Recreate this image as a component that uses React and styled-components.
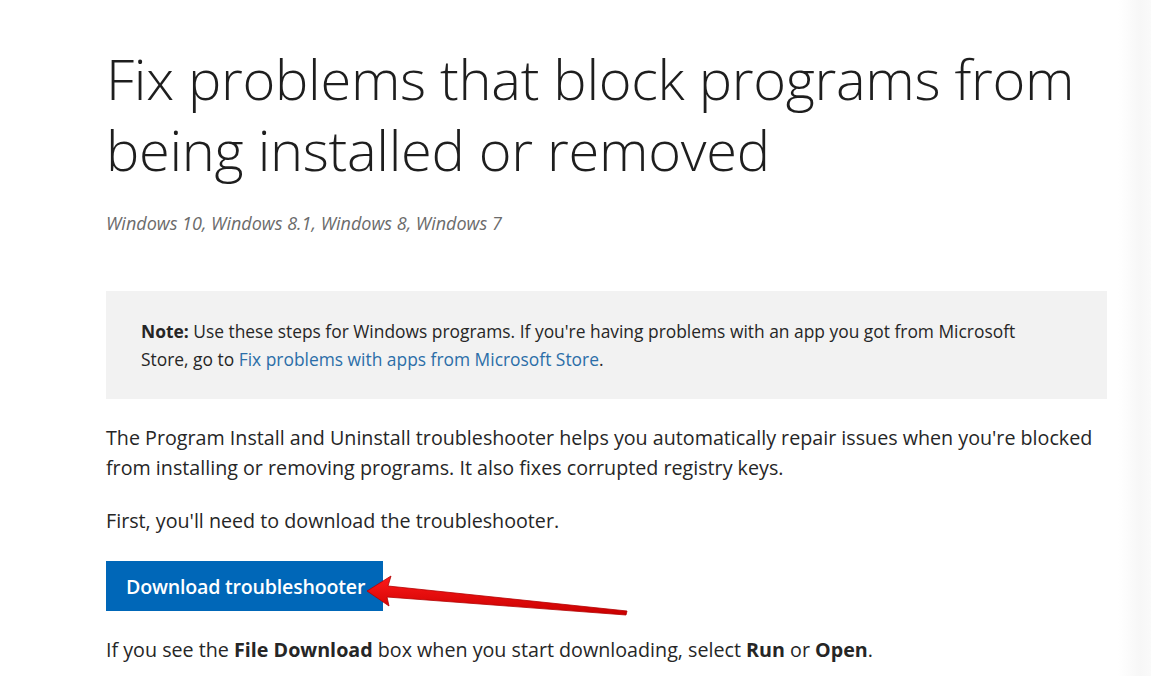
import React from 'react';
import styled, { createGlobalStyle } from 'styled-components';

const GlobalStyle = createGlobalStyle`
  body {
    margin: 0;
    background: #ffffff;
    font-family: "Open Sans", "Noto Sans", Arial, sans-serif;
    color: #262626;
  }
`;

const Page = styled.div`
  position: relative;
  width: 1151px;
  height: 676px;
  overflow: hidden;
  background: linear-gradient(to right, #ffffff 0, #ffffff 1118px, #f7f7f7 1140px, #fafafa 1151px);
`;

const Content = styled.main`
  width: 1001px;
  padding: 43px 0 0 106px;
`;

const Title = styled.h1`
  margin: 0;
  white-space: nowrap;
  font-family: "Open Sans", "Noto Sans", sans-serif;
  font-weight: 300;
  font-size: 56px;
  line-height: 71px;
  color: #1e1e1e;
  letter-spacing: -0.3px;
`;

const Applies = styled.p`
  margin: 26px 0 0;
  font-style: italic;
  font-size: 18px;
  line-height: 24px;
  color: #6b6b6b;
`;

const Note = styled.div`
  margin-top: 56px;
  background: #f2f2f2;
  padding: 26px 35px 26px 35px;
  font-size: 17.4px;
  line-height: 28px;
  color: #262626;
  white-space: nowrap;
`;

const Link = styled.a`
  color: #2b6ea8;
  text-decoration: none;
`;

const Para = styled.p`
  margin: ${(p) => p.$top || 0}px 0 0;
  font-size: 19.7px;
  line-height: 30px;
  color: #262626;
  white-space: nowrap;
`;

const ButtonRow = styled.div`
  position: relative;
  margin-top: 25px;
  height: 50px;
`;

const Button = styled.button`
  display: inline-flex;
  align-items: center;
  height: 50px;
  padding: 0 18px 0 20px;
  border: none;
  background: #0067b8;
  color: #ffffff;
  font-family: "Open Sans", "Noto Sans", sans-serif;
  font-weight: 600;
  font-size: 19.6px;
  letter-spacing: -0.2px;
  cursor: pointer;
`;

const Arrow = styled.svg`
  position: absolute;
  left: 0;
  top: 0;
  overflow: visible;
  pointer-events: none;
`;

export default function App() {
  return (
    <Page>
      <GlobalStyle />
      <Content>
        <Title>
          Fix problems that block programs from
          <br />
          being installed or removed
        </Title>
        <Applies>Windows 10, Windows 8.1, Windows 8, Windows 7</Applies>
        <Note>
          <strong>Note:</strong> Use these steps for Windows programs. If you're having problems with an app you got from Microsoft
          <br />
          Store, go to <Link href="#">Fix problems with apps from Microsoft Store</Link>.
        </Note>
        <Para $top={24}>
          The Program Install and Uninstall troubleshooter helps you automatically repair issues when you're blocked
          <br />
          from installing or removing programs. It also fixes corrupted registry keys.
        </Para>
        <Para $top={23}>First, you'll need to download the troubleshooter.</Para>
        <ButtonRow>
          <Button>Download troubleshooter</Button>
          <Arrow width="540" height="60" viewBox="0 0 540 60">
            <defs>
              <linearGradient id="shaft" x1="0" y1="0" x2="0" y2="1">
                <stop offset="0" stopColor="#ff1a1a" />
                <stop offset="1" stopColor="#c80000" />
              </linearGradient>
            </defs>
            <polygon
              points="261,30 285,15 282,25 521,50 520,54 281,36 283,45"
              fill="url(#shaft)"
              stroke="#b30000"
              strokeWidth="0.8"
              strokeLinejoin="round"
            />
          </Arrow>
        </ButtonRow>
        <Para $top={24}>
          If you see the <strong>File Download</strong> box when you start downloading, select <strong>Run</strong> or <strong>Open</strong>.
        </Para>
      </Content>
    </Page>
  );
}
